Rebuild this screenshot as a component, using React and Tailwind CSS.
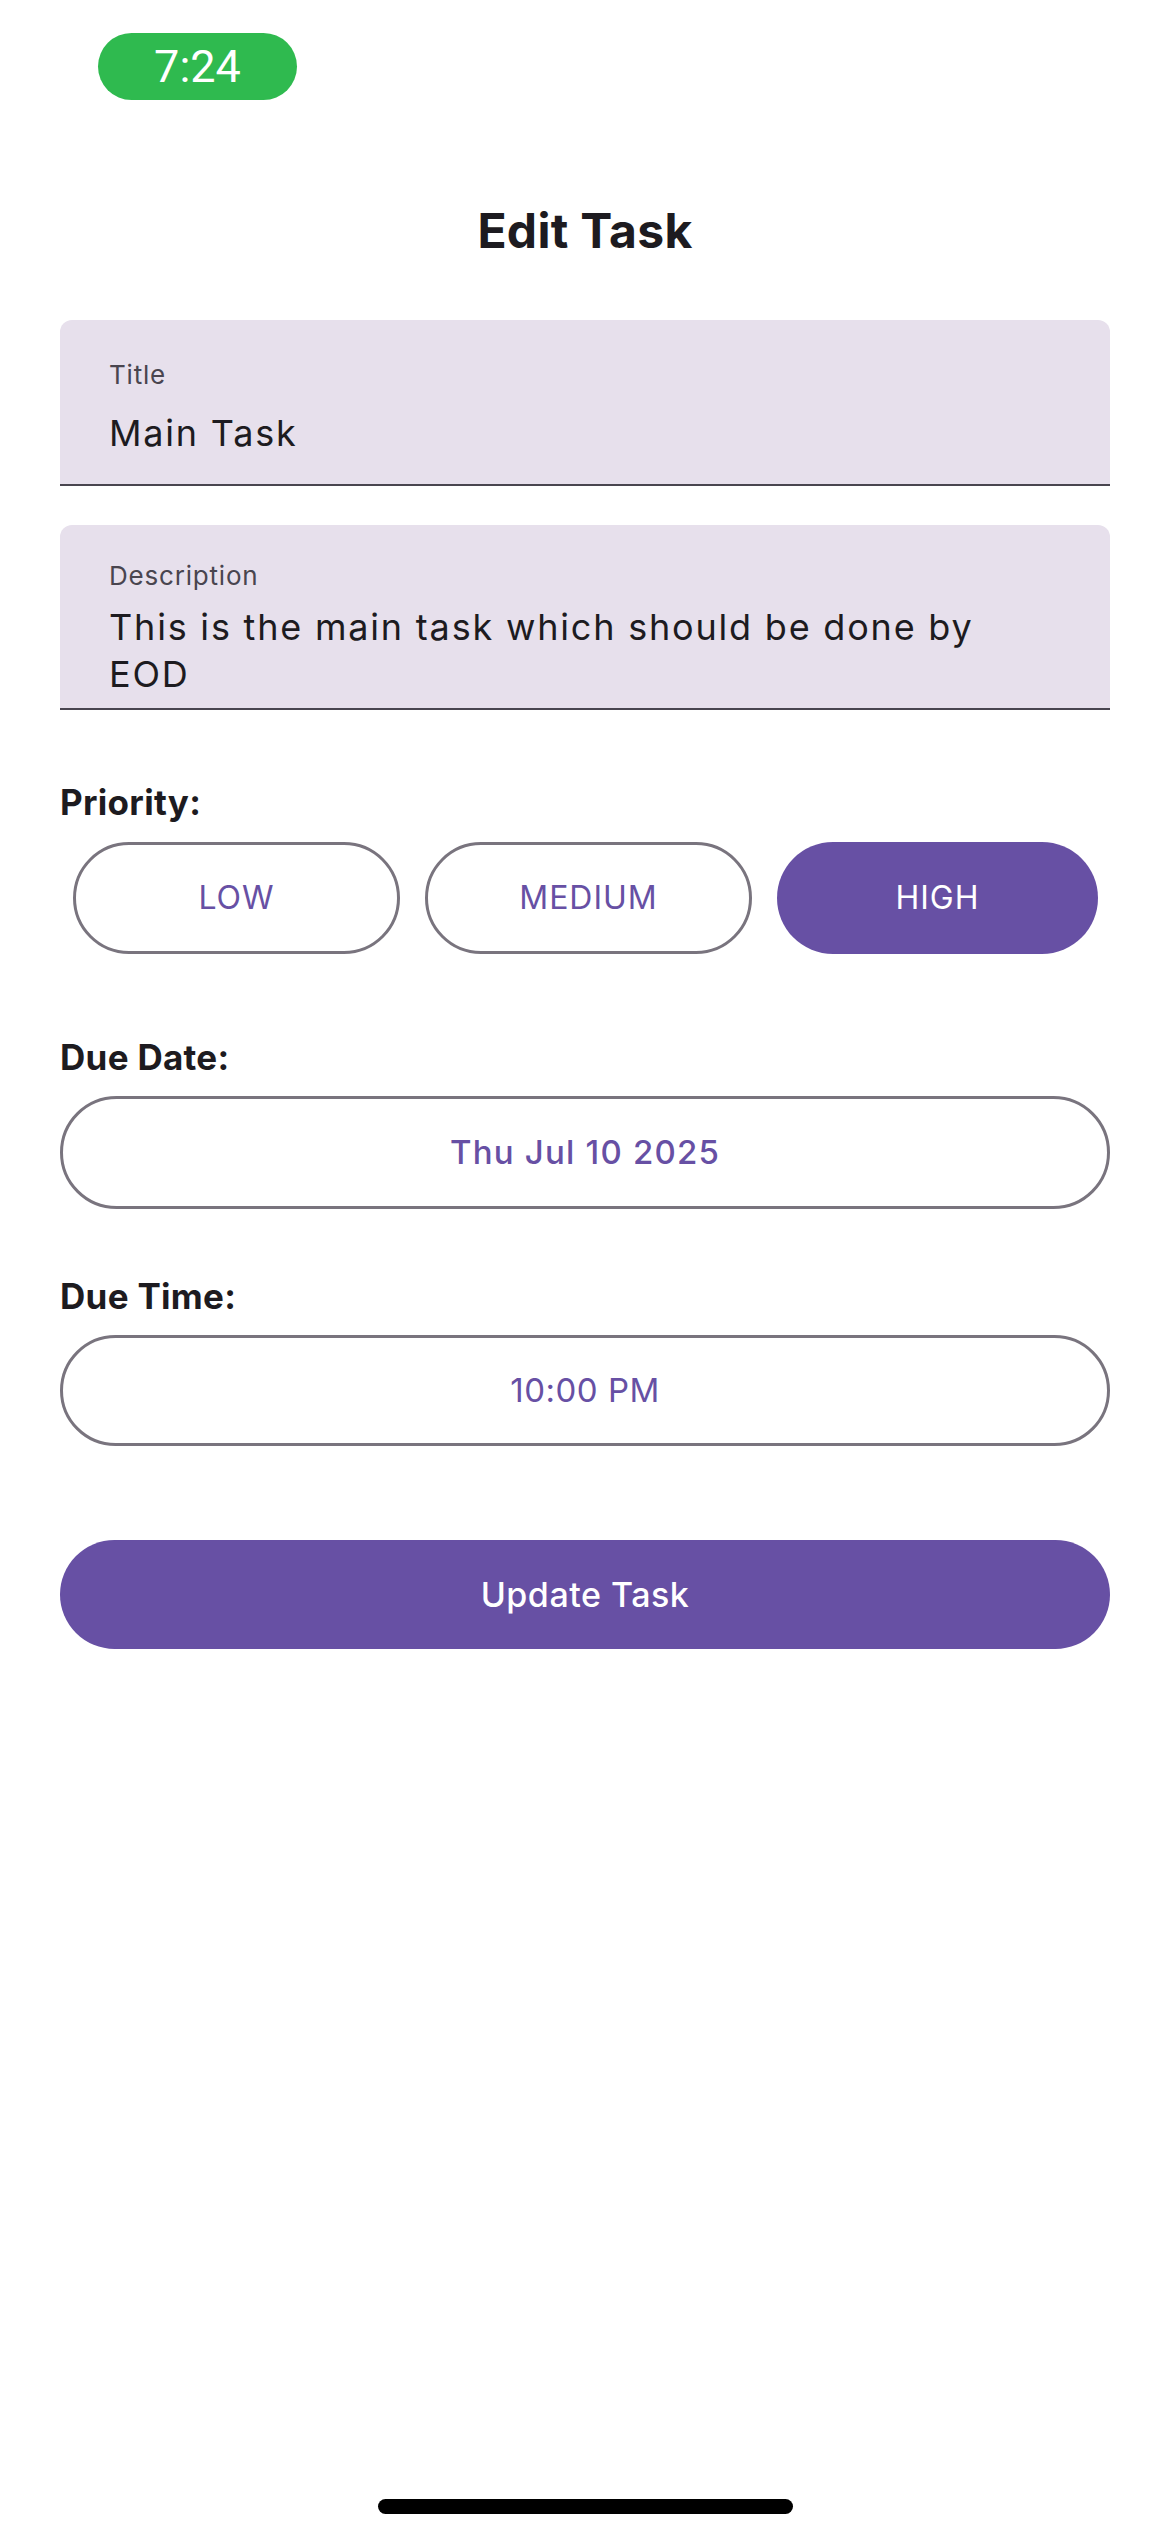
import { useState } from 'react';

const levels = ['LOW', 'MEDIUM', 'HIGH'];

export default function App() {
  const [priority, setPriority] = useState('HIGH');

  return (
    <div className="relative w-[1170px] h-[2532px] bg-white font-['Inter',sans-serif] text-[#1d1b20]">
      {/* Status bar */}
      <div className="pt-[33px] pl-[98px]">
        <div className="w-[199px] h-[67px] rounded-full bg-[#2fba4f] flex items-center justify-center text-white text-[45px] font-['Roboto',sans-serif] leading-none">
          7:24
        </div>
      </div>

      <h1 className="mt-[101px] text-center text-[48px] leading-[60px] font-bold tracking-[0.3px]">Edit Task</h1>

      <div className="px-[60px]">
        {/* Title field */}
        <div className="mt-[59px] h-[166px] bg-[#e7e0ec] rounded-t-[12px] border-b-2 border-[#49454f] px-[49px] pt-[39px]">
          <div className="text-[26px] leading-[32px] text-[#49454f] tracking-[0.8px]">Title</div>
          <div className="mt-[20px] text-[36px] leading-[44px] tracking-[1.8px]">Main Task</div>
        </div>

        {/* Description field */}
        <div className="mt-[39px] h-[185px] bg-[#e7e0ec] rounded-t-[12px] border-b-2 border-[#49454f] px-[49px] pt-[35px]">
          <div className="text-[26px] leading-[32px] text-[#49454f] tracking-[0.8px]">Description</div>
          <div className="mt-[12px] text-[36px] leading-[47px] tracking-[1.8px] pr-[40px]">
            This is the main task which should be done by EOD
          </div>
        </div>

        <div className="mt-[70px] text-[35px] leading-[44px] font-bold tracking-[0.3px]">Priority:</div>
        <div className="mt-[18px] pl-[13px] pr-[12px] flex gap-[25px]">
          {levels.map(l => (
            <button
              key={l}
              onClick={() => setPriority(l)}
              className={`flex-1 h-[112px] rounded-full text-[32px] tracking-[1px] flex items-center justify-center ${
                priority === l ? 'bg-[#6750a4] text-white' : 'border-[3px] border-[#79747e] text-[#6750a4]'
              }`}
            >
              {l}
            </button>
          ))}
        </div>

        <div className="mt-[81px] text-[35px] leading-[44px] font-bold tracking-[0.3px]">Due Date:</div>
        <button className="mt-[17px] w-full h-[113px] rounded-full border-[3px] border-[#79747e] text-[#6750a4] text-[33px] font-medium tracking-[1.2px] flex items-center justify-center">
          Thu Jul 10 2025
        </button>

        <div className="mt-[65px] text-[35px] leading-[44px] font-bold tracking-[0.3px]">Due Time:</div>
        <button className="mt-[17px] w-full h-[111px] rounded-full border-[3px] border-[#79747e] text-[#6750a4] text-[33px] tracking-[0.5px] flex items-center justify-center">
          10:00 PM
        </button>

        <button className="mt-[94px] w-full h-[109px] rounded-full bg-[#6750a4] text-white text-[34px] font-medium tracking-[0.5px] flex items-center justify-center">
          Update Task
        </button>
      </div>

      {/* Home indicator */}
      <div className="absolute bottom-[18px] left-[378px] w-[415px] h-[15px] rounded-full bg-black" />
    </div>
  );
}
